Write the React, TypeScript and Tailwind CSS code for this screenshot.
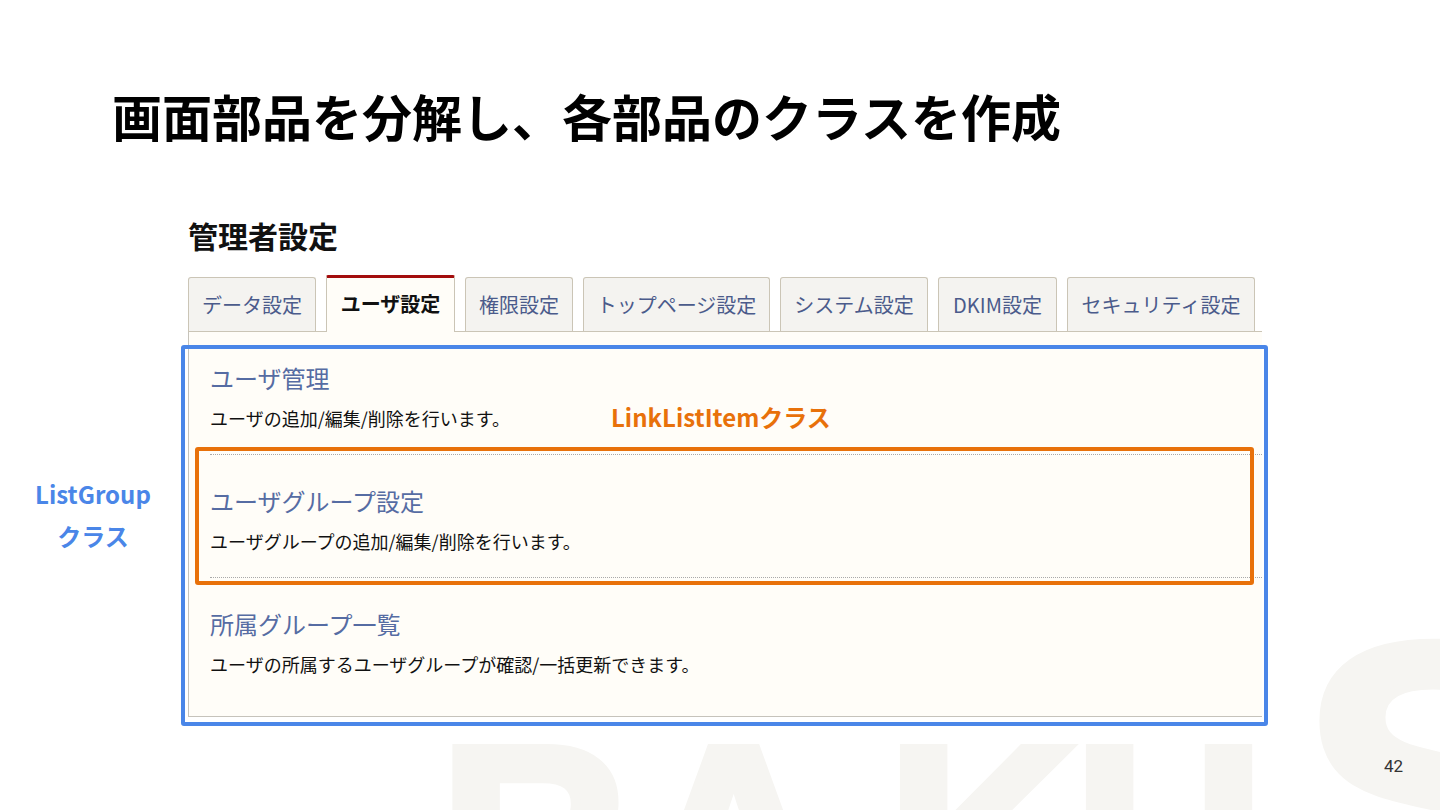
const tabs = [
  { label: "データ設定", width: "w-[128px]" },
  { label: "ユーザ設定", width: "w-[129px]", active: true },
  { label: "権限設定", width: "w-[108px]" },
  { label: "トップページ設定", width: "w-[187px]" },
  { label: "システム設定", width: "w-[148px]" },
  { label: "DKIM設定", width: "w-[119px]" },
  { label: "セキュリティ設定", width: "w-[188px]" },
];

const items = [
  { title: "ユーザ管理", body: "ユーザの追加/編集/削除を行います。" },
  { title: "ユーザグループ設定", body: "ユーザグループの追加/編集/削除を行います。" },
  { title: "所属グループ一覧", body: "ユーザの所属するユーザグループが確認/一括更新できます。" },
];

// Faint company-logo letters peeking in at the bottom of the slide
function Watermark() {
  return (
    <div
      aria-hidden
      className="pointer-events-none absolute inset-0 font-['Liberation_Sans',sans-serif] font-bold leading-none text-[#f6f5f2] [-webkit-text-stroke:10px_#f6f5f2]"
    >
      <div className="absolute left-[440px] top-[708px] flex text-[260px]">
        <span>R</span>
        <span className="ml-[12px]">A</span>
        <span className="ml-[60px]">K</span>
        <span>U</span>
      </div>
      <span className="absolute left-[1300px] top-[585px] text-[400px]">S</span>
    </div>
  );
}

function Tab({ label, width, active }: { label: string; width: string; active?: boolean }) {
  if (active) {
    return (
      <div
        className={`${width} -mb-px flex h-[57px] items-center justify-center rounded-t-[2px] border-x border-t-[3px] border-x-[#cbc5b6] border-t-[#a30d0d] bg-[#fffdf8] pb-[3px] text-[20px] font-bold text-[#111]`}
      >
        {label}
      </div>
    );
  }
  return (
    <div
      className={`${width} flex h-[54px] items-center justify-center rounded-t-[3px] border-x border-t border-[#cbc5b6] bg-[#f4f3f0] text-[20px] text-[#4b5b8b]`}
    >
      {label}
    </div>
  );
}

function LinkListItem({ title, body, last }: { title: string; body: string; last?: boolean }) {
  return (
    <div
      className={
        last
          ? "ml-[21px] pt-[31px] pb-[40px]"
          : "ml-[21px] border-b border-dotted border-[#a9a9a9] pt-[31px] pb-[24px]"
      }
    >
      <div className="text-[24px] leading-[30px] text-[#566ca3]">{title}</div>
      <p className="mt-[13px] text-[18px] leading-[24px] text-[#111]">{body}</p>
    </div>
  );
}

export default function App() {
  return (
    <div className="relative h-[810px] w-[1440px] overflow-hidden bg-white font-['Noto_Sans_CJK_JP',sans-serif]">
      <Watermark />

      <h1 className="relative pl-[112px] pt-[90px] text-[50px] font-bold leading-none text-black">
        画面部品を分解し、各部品のクラスを作成
      </h1>

      {/* Screenshot of the admin settings page */}
      <div className="relative ml-[188px] mt-[80px] w-[1074px]">
        <h2 className="text-[30px] font-bold leading-none text-[#111]">管理者設定</h2>

        <div className="mt-[25px] flex items-end gap-[10px] border-b border-[#cbc5b6]">
          {tabs.map((tab) => (
            <Tab key={tab.label} {...tab} />
          ))}
        </div>

        <div className="border-b border-l border-[#c6c3bb] bg-[#fffdf8]">
          {items.map((item, i) => (
            <LinkListItem key={item.title} {...item} last={i === items.length - 1} />
          ))}
        </div>

        {/* Annotations */}
        <div className="absolute left-[-7px] top-[125px] h-[381px] w-[1087px] rounded-[3px] border-4 border-[#4a86e8]" />
        <div className="absolute left-[7px] top-[227px] h-[138px] w-[1059px] rounded-[3px] border-4 border-[#e8710a]" />
        <div className="absolute left-[423px] top-[182px] text-[24px] font-bold leading-[30px] text-[#e8710a]">
          LinkListItemクラス
        </div>
      </div>

      <div className="absolute left-[20px] top-[473px] w-[146px] text-center text-[24px] font-bold leading-[42px] text-[#4a86e8]">
        <div>ListGroup</div>
        <div>クラス</div>
      </div>

      <div className="absolute left-[1384px] top-[754px] font-['Roboto',sans-serif] text-[17px] leading-[24px] text-[#333]">
        42
      </div>
    </div>
  );
}
